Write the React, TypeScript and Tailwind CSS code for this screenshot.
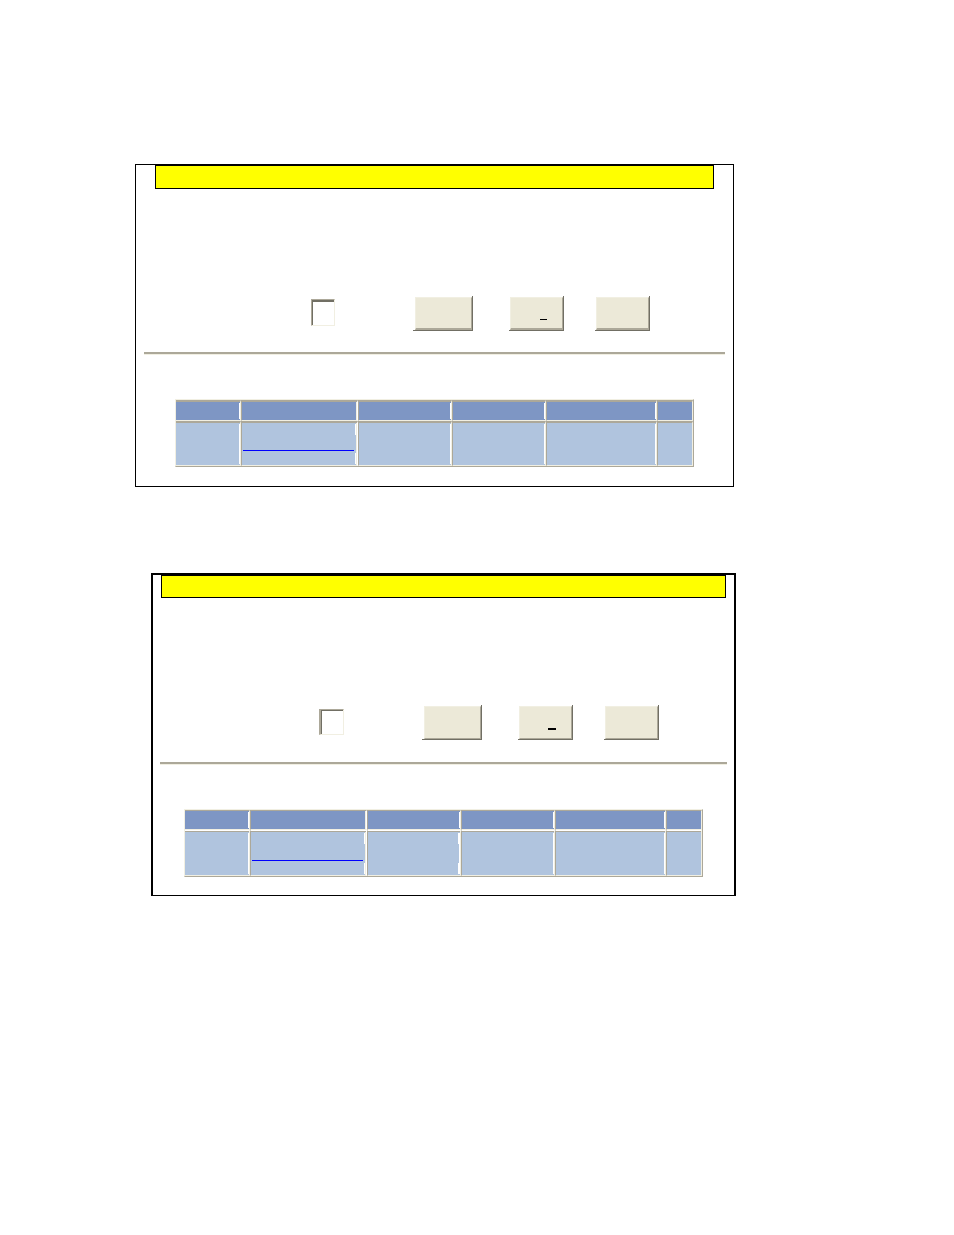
import clsx from "clsx";

const columns = [
  { id: "first", width: "w-[65px]" },
  { id: "second", width: "w-[117px]" },
  { id: "third", width: "w-[94px]" },
  { id: "fourth", width: "w-[94px]" },
  { id: "fifth", width: "w-[111px]" },
  { id: "last", width: "w-[36px]" },
];

type PanelProps = {
  heavy?: boolean;
  className?: string;
};

function BevelButton({
  label,
  wide,
  mnemonic,
  heavy,
}: {
  label: string;
  wide?: boolean;
  mnemonic?: boolean;
  heavy?: boolean;
}) {
  return (
    <button
      type="button"
      aria-label={label}
      className={clsx(
        "flex h-[35px] shrink-0 border-r border-b border-[#716f64] pt-px",
        wide ? "w-[60px] pl-0.5" : "w-[55px] pl-px"
      )}
    >
      <span
        className={clsx(
          "flex h-full w-full items-end justify-center border border-t-[#f1efe2] border-l-[#f1efe2] border-r-[#aca899] border-b-[#aca899] bg-[#ece9d8] pb-2",
          heavy ? "pl-3" : "border-b-2 pl-3.5"
        )}
      >
        {/* underline of the access key */}
        {mnemonic && (
          <span className={clsx("bg-black", heavy ? "h-0.5 w-2" : "h-px w-[7px]")} />
        )}
      </span>
    </button>
  );
}

function ResultsTable({ heavy }: { heavy?: boolean }) {
  // side borders of a cell; the second column is followed by a white gutter
  const edges = (i: number) =>
    clsx(
      i > 0 && "border-l border-l-[#aca899]",
      i === 1 ? "border-r border-r-white" : "border-r border-r-[#f1efe2]"
    );

  const inner = (i: number) =>
    clsx(
      "flex flex-col justify-between items-end",
      i === 1 && "border-r border-[#f1efe2]"
    );

  return (
    <table className="mx-auto w-[519px] table-fixed border-separate border-spacing-0 border border-t-[#f1efe2] border-l-[#f1efe2] border-r-[#aca899] border-b-[#aca899]">
      <thead>
        <tr>
          {columns.map((col, i) => (
            <th
              key={col.id}
              scope="col"
              className={clsx(
                "border-b border-t-[#aca899] border-b-[#f1efe2] bg-[#7e96c4] p-0",
                heavy ? "border-t" : "border-t-2",
                col.width,
                edges(i)
              )}
            >
              <div className={clsx("h-[18px] py-px", inner(i))}>
                {i !== 1 && i < 5 && <span className="w-px grow bg-white" />}
              </div>
            </th>
          ))}
        </tr>
      </thead>
      <tbody>
        <tr>
          {columns.map((col, i) => {
            const split = i === 1 || (i === 2 && heavy);
            const tick = clsx("h-[11px] bg-white", i === 2 ? "w-0.5" : "w-px");
            return (
              <td
                key={col.id}
                className={clsx(
                  "border-b border-b-[#f1efe2] bg-[#b0c4de] p-0",
                  heavy ? "border-t border-t-white" : "border-t-2 border-t-[#aca899]",
                  edges(i)
                )}
              >
                {heavy && <div className="h-px bg-[#aca899]" />}
                <div className={clsx("py-px", heavy ? "h-[43px]" : "h-[42px]", inner(i))}>
                  {split ? (
                    <>
                      <span className={tick} />
                      {i === 1 ? (
                        <a
                          href="#details"
                          aria-label="Details"
                          className="mr-0.5 mb-0.5 ml-px block grow self-stretch border-b border-[#0000ff]"
                        />
                      ) : (
                        <span className="w-px grow bg-white" />
                      )}
                      <span className={tick} />
                    </>
                  ) : (
                    i < 5 && <span className="w-px grow bg-white" />
                  )}
                </div>
              </td>
            );
          })}
        </tr>
      </tbody>
    </table>
  );
}

function SearchPanel({ heavy, className }: PanelProps) {
  return (
    <section
      className={clsx(
        "border-black",
        heavy ? "border-2 border-b pb-[18px]" : "border pb-[19px]",
        className
      )}
    >
      <div
        className={clsx(
          "border border-black bg-[#ffff00]",
          heavy ? "mx-2 h-[23px]" : "mx-[19px] h-6"
        )}
      />

      <form
        className={clsx("mt-[107px] flex", heavy ? "pl-[166px]" : "pl-[175px]")}
        onSubmit={(e) => e.preventDefault()}
      >
        <div className={clsx("flex shrink-0", heavy ? "py-1" : "py-[3px]")}>
          <div
            className={clsx(
              "border border-t-[#aca899] border-l-[#aca899] border-r-[#f1efe2] border-b-[#f1efe2]",
              heavy ? "h-[26px] w-[25px] border-l-2" : "h-[27px] w-6"
            )}
          >
            <input
              type="text"
              aria-label="Value"
              className={clsx(
                "block h-full w-full border-l border-[#716f64] bg-white outline-none",
                heavy ? "border-t" : "border-t-2"
              )}
            />
          </div>
        </div>
        <div className="ml-[78px] flex">
          <BevelButton label="Submit" wide heavy={heavy} />
        </div>
        <div className="ml-9 flex gap-[31px]">
          <BevelButton label="Reset" mnemonic heavy={heavy} />
          <BevelButton label="Close" heavy={heavy} />
        </div>
      </form>

      <hr
        className={clsx(
          "h-[3px] border-t-2 border-b border-t-[#aca899] border-b-[#f1efe2]",
          heavy ? "mx-[7px] mt-[22px]" : "mx-2 mt-[21px]"
        )}
      />

      <div className="mt-11">
        <ResultsTable heavy={heavy} />
      </div>
    </section>
  );
}

export default function App() {
  return (
    <main className="min-h-screen bg-white pt-[164px] pb-16 font-['Liberation_Sans',sans-serif]">
      <SearchPanel className="mr-[220px] ml-[135px]" />
      <SearchPanel heavy className="mt-[86px] mr-[218px] ml-[151px]" />
    </main>
  );
}
